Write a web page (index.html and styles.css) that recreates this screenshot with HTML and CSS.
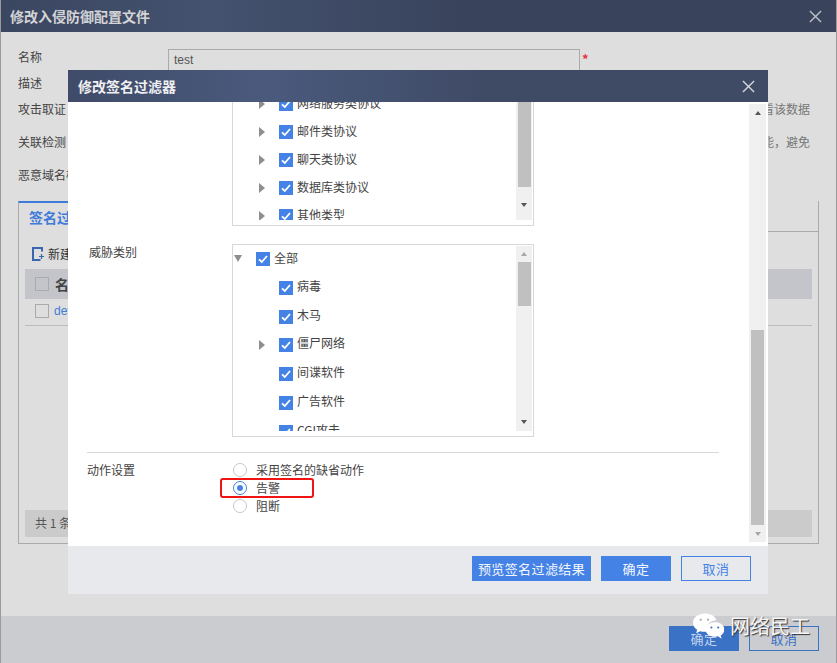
FILE: index.html
```html
<!DOCTYPE html>
<html lang="zh-CN">
<head>
<meta charset="utf-8">
<title>修改签名过滤器</title>
<link rel="stylesheet" href="styles.css">
</head>
<body>
<svg class="sprite" width="0" height="0" aria-hidden="true">
  <symbol id="chk" viewBox="0 0 14 14"><path d="M3 7.300 5.800 10 11 4" fill="none" stroke="#fff" stroke-width="1.800"/></symbol>
  <symbol id="x" viewBox="0 0 14 14"><path d="M1 1 13 13M13 1 1 13" fill="none" stroke="currentColor" stroke-width="1.500"/></symbol>
</svg>
<div class="app">
  <header class="win-head outer-head">
    <span class="win-title">修改入侵防御配置文件</span>
    <svg class="close"><use href="#x"/></svg>
  </header>
  <main class="outer-body">
    <div class="form">
      <div class="f-row f-26"><span class="f-label">名称</span><div class="f-input">test</div><span class="req">*</span></div>
      <div class="f-row f-26"><span class="f-label">描述</span></div>
      <div class="f-row f-33"><span class="f-label">攻击取证</span><span class="f-note">查看该数据</span></div>
      <div class="f-row f-33"><span class="f-label">关联检测</span><span class="f-note">功能，避免</span></div>
      <div class="f-row f-34"><span class="f-label">恶意域名检测</span></div>
    </div>
    <section class="panel">
      <div class="tabs"><span class="tab">签名过滤器</span></div>
      <div class="panel-in">
        <div class="toolbar">
          <svg class="new-ic" viewBox="0 0 12 14"><path d="M10 4.500V1H1v12h7.500" fill="none" stroke="#3a66b0" stroke-width="2"/><path d="M7 9.500h5M9.500 7v5" fill="none" stroke="#3a66b0" stroke-width="1.200"/></svg>
          <span>新建</span>
        </div>
        <div class="t-head"><span class="o-box"></span><b>名称</b></div>
        <div class="t-row"><span class="o-box"></span><span class="t-link">default</span></div>
        <div class="t-foot">共 1 条</div>
      </div>
    </section>
  </main>
  <footer class="outer-foot">
    <span class="btn btn-fill dim">确定</span>
    <span class="btn btn-line dim">取消</span>
  </footer>

  <div class="modal">
    <header class="win-head modal-head">
      <span class="win-title">修改签名过滤器</span>
      <svg class="close"><use href="#x"/></svg>
    </header>
    <div class="modal-body">
      <div class="scroll-content">
        <div class="row row-first">
          <span class="label"></span>
          <div class="list list-a">
            <div class="list-in">
              <div class="tree tree-scrolled">
                <div class="node n2"><i class="tri"></i><span class="cb"><svg><use href="#chk"/></svg></span><span class="node-text">网络服务类协议</span></div>
                <div class="node n2"><i class="tri"></i><span class="cb"><svg><use href="#chk"/></svg></span><span class="node-text">邮件类协议</span></div>
                <div class="node n2"><i class="tri"></i><span class="cb"><svg><use href="#chk"/></svg></span><span class="node-text">聊天类协议</span></div>
                <div class="node n2"><i class="tri"></i><span class="cb"><svg><use href="#chk"/></svg></span><span class="node-text">数据库类协议</span></div>
                <div class="node n2"><i class="tri"></i><span class="cb"><svg><use href="#chk"/></svg></span><span class="node-text">其他类型</span></div>
              </div>
              <div class="sb">
                <div class="sb-thumb thumb-a"></div>
                <i class="arr-d"></i>
              </div>
            </div>
          </div>
        </div>
        <div class="row row-second">
          <span class="label label-in">威胁类别</span>
          <div class="list list-b">
            <div class="list-in">
              <div class="tree tree-b">
                <div class="node n1"><i class="tri-d"></i><span class="cb"><svg><use href="#chk"/></svg></span><span class="node-text">全部</span></div>
                <div class="node n2"><i class="tri-none"></i><span class="cb"><svg><use href="#chk"/></svg></span><span class="node-text">病毒</span></div>
                <div class="node n2"><i class="tri-none"></i><span class="cb"><svg><use href="#chk"/></svg></span><span class="node-text">木马</span></div>
                <div class="node n2"><i class="tri"></i><span class="cb"><svg><use href="#chk"/></svg></span><span class="node-text">僵尸网络</span></div>
                <div class="node n2"><i class="tri-none"></i><span class="cb"><svg><use href="#chk"/></svg></span><span class="node-text">间谍软件</span></div>
                <div class="node n2"><i class="tri-none"></i><span class="cb"><svg><use href="#chk"/></svg></span><span class="node-text">广告软件</span></div>
                <div class="node n2"><i class="tri-none"></i><span class="cb"><svg><use href="#chk"/></svg></span><span class="node-text">CGI攻击</span></div>
              </div>
              <div class="sb">
                <i class="arr-u light"></i>
                <div class="sb-thumb thumb-b"></div>
                <i class="arr-d arr-end"></i>
              </div>
            </div>
          </div>
        </div>
        <div class="rule"></div>
        <div class="row row-action">
          <span class="label">动作设置</span>
          <div class="radios">
            <div class="radio-row"><span class="radio"></span><span class="radio-text">采用签名的缺省动作</span></div>
            <div class="radio-row"><span class="radio on"></span><span class="radio-text">告警</span></div>
            <div class="radio-row"><span class="radio"></span><span class="radio-text">阻断</span></div>
            <div class="mark"></div>
          </div>
        </div>
      </div>
      <div class="vbar">
        <i class="arr-u"></i>
        <div class="vbar-thumb"></div>
        <i class="arr-d light"></i>
      </div>
    </div>
    <footer class="modal-foot">
      <span class="btn btn-fill btn-wide">预览签名过滤结果</span>
      <span class="btn btn-fill">确定</span>
      <span class="btn btn-line">取消</span>
    </footer>
  </div>

  <div class="wm">
    <svg class="wm-ic" viewBox="0 0 32 28">
      <path d="M12 0C5.500 0 0 4 0 9.500c0 3 1.700 5.600 4.300 7.400L3.200 20.500l4.300-2.200c1.400.4 3 .6 4.500.6 1 0 1.500 0 2.500-.2-.4-1-.5-2-.5-3 0-5 4.700-8.700 10.300-8.700C22.800 2.800 18 0 12 0Z" fill="#fff"/>
      <path d="M22.500 9C17.500 9 13 12.100 13 16.500S17.500 24 22.500 24c1 0 2.300-.2 3.300-.5l3.700 2.500-.9-3.300c2.400-1.500 3.900-3.800 3.900-6.200C32.500 12.100 27.500 9 22.500 9Z" fill="#fff"/>
      <circle cx="8" cy="6.500" r="1.300" fill="#bbb"/><circle cx="15.500" cy="6.500" r="1.300" fill="#bbb"/>
      <circle cx="19" cy="14.500" r="1.100" fill="#3a72c6"/><circle cx="26" cy="14.500" r="1.100" fill="#3a72c6"/>
    </svg>
    <span class="wm-text">网络民工</span>
  </div>
</div>
</body>
</html>
```
FILE: styles.css
```css
* { box-sizing: border-box; }
html, body { margin: 0; padding: 0; }
body {
  background: #9b9b9b;
  font-family: "Noto Sans CJK SC", "Liberation Sans", sans-serif;
  font-size: 12px;
  line-height: 16px;
  color: #444;
  overflow: hidden;
}
.sprite { position: absolute; }
.app {
  position: relative;
  width: 837px;
  height: 663px;
  padding: 0 1px;
  display: flex;
  flex-direction: column;
  overflow: hidden;
}

/* Window chrome */
.win-head {
  height: 32px;
  flex: none;
  display: flex;
  align-items: center;
  justify-content: space-between;
}
.outer-head {
  padding: 0 14px 0 9px;
  background: linear-gradient(90deg, #3b4660, #44526f 25%, #39435c 55%);
  color: #d4d4d6;
}
.modal-head {
  padding: 0 13px 0 10px;
  background: linear-gradient(90deg, #3f4b68, #4a5a7d 28%, #3f4a65 60%);
  color: #f0f0f2;
}
.win-title { font-size: 14px; font-weight: 700; }
.close { width: 13px; height: 13px; color: #bcbfc6; }
.modal-head .close { color: #d4d6dc; }

/* Outer window */
.outer-body {
  flex: 1;
  min-height: 0;
  background: #dedede;
  padding: 17px 17px 0;
  display: flex;
  flex-direction: column;
}
.form { flex: none; }
.f-row { display: flex; align-items: flex-start; }
.f-26 { height: 26px; }
.f-33 { height: 33px; }
.f-34 { height: 34px; }
.f-label { width: 150px; flex: none; }
.f-input {
  width: 412px;
  height: 24px;
  border: 1px solid #aaa;
  padding: 2px 4px 2px 5px;
  font-family: "Liberation Sans", sans-serif;
  color: #555;
}
.req { color: #e8353d; margin: 2px 0 0 2px; font-size: 13px; font-weight: 700; }
.f-note { margin-left: auto; margin-right: 9px; color: #777; }

.panel {
  width: 801px;
  height: 343px;
  border: 1px solid #aaa;
  border-top: 0;
  display: flex;
  flex-direction: column;
}
.tabs {
  height: 31px;
  flex: none;
  border-bottom: 1px solid #aaa;
  display: flex;
  margin: 0 -1px;
}
.tab {
  width: 110px;
  height: 31px;
  background: #dedede;
  border-top: 2px solid #3f7bd9;
  border-left: 1px solid #aaa;
  padding: 6px 0 0 10px;
  font-size: 14px;
  font-weight: 700;
  color: #3f7bd9;
}
.panel-in {
  flex: 1;
  min-height: 0;
  padding: 0 6px 6px;
  display: flex;
  flex-direction: column;
}
.toolbar { height: 37px; flex: none; display: flex; align-items: center; gap: 4px; padding: 6px 0 0 7px; color: #333; }
.new-ic { width: 12px; height: 14px; }
.t-head {
  height: 30px;
  flex: none;
  background: #c3c5cb;
  display: flex;
  align-items: center;
  gap: 6px;
  padding-left: 10px;
  font-size: 14px;
}
.t-row {
  height: 27px;
  flex: none;
  border-bottom: 1px solid #bcbcbc;
  display: flex;
  align-items: center;
  gap: 5px;
  padding: 0 0 3px 10px;
}
.t-link { color: #3f7bd9; font-family: "Liberation Sans", sans-serif; }
.o-box { width: 14px; height: 14px; border: 1px solid #aaa; flex: none; }
.t-foot {
  height: 27px;
  flex: none;
  margin-top: auto;
  background: #cbcbcb;
  padding: 5px 10px;
  color: #555;
}
.outer-foot {
  height: 47px;
  flex: none;
  background: #cbcccf;
  display: flex;
  justify-content: flex-end;
  gap: 10px;
  padding: 10px 17px 0 0;
}

/* Buttons */
.btn {
  width: 70px;
  height: 25px;
  font-size: 13px;
  line-height: 23px;
  text-align: center;
  border: 1px solid #4582e6;
  letter-spacing: .4px;
}
.btn-fill { background: #4582e6; color: #f4f7fd; }
.btn-line { color: #4582e6; }
.btn-wide { width: 119px; white-space: nowrap; }
.btn-fill.dim { background: #3a72c6; border-color: #3a72c6; color: #c4d4ee; }
.btn-line.dim { border-color: #3a72c6; color: #3a72c6; }

/* Modal */
.modal {
  position: absolute;
  left: 68px;
  top: 70px;
  width: 700px;
  height: 524px;
  display: flex;
  flex-direction: column;
  background: #fff;
}
.modal-body {
  flex: none;
  height: 444px;
  padding: 2px 2px 4px 0;
  display: flex;
  overflow: hidden;
}
.scroll-content { flex: 1; min-width: 0; }
.vbar {
  width: 17px;
  flex: none;
  background: #f0f0f0;
  display: flex;
  flex-direction: column;
  align-items: center;
  padding: 7px 0 6px;
}
.vbar-thumb {
  width: 13px;
  height: 195px;
  background: #c0c0c0;
  margin: auto 0 4px;
}
.vbar .arr-d { margin-top: 3px; }

.row { display: flex; padding-left: 19px; }
.row-first { margin-top: -8px; }
.row-second { margin-top: 18px; }
.row-action { margin-top: 8px; }
.label { width: 145px; flex: none; }
.label-in { padding-left: 2px; }
.row-action .label { padding-top: 1px; }

.list {
  width: 302px;
  border: 1px solid #d8d8d8;
  padding: 1px 1px 5px;
  flex: none;
  background: #fff;
}
.list-a { height: 130px; border-top: 0; padding-top: 0; }
.list-b { height: 193px; }
.list-in { display: flex; height: 100%; }
.tree { flex: 1; min-width: 0; overflow: hidden; }
.tree-scrolled .node { height: 28px; }
.tree-scrolled .node:first-child { margin-top: -5px; }
.node {
  height: 28.8px;
  display: flex;
  align-items: flex-start;
  padding-top: 6px;
  line-height: 14px;
  white-space: nowrap;
}
.node-text { margin-top: -1px; }
.tree-b .n2 .node-text { margin-top: -2px; }
.n1 { padding-left: 0; }
.n2 { padding-left: 23px; }
.node > i { width: 22px; flex: none; display: block; position: relative; height: 14px; }
.tri::before {
  content: "";
  position: absolute;
  left: 2px;
  top: 2px;
  border-left: 6px solid #8e8e8e;
  border-top: 5px solid transparent;
  border-bottom: 5px solid transparent;
}
.tri-d::before {
  content: "";
  position: absolute;
  left: 0;
  top: 3px;
  border-top: 7px solid #8e8e8e;
  border-left: 4.500px solid transparent;
  border-right: 4.500px solid transparent;
}
.cb {
  width: 14px;
  height: 14px;
  flex: none;
  background: #4582e6;
  margin-right: 4px;
  display: block;
}
.cb svg { display: block; width: 14px; height: 14px; }

/* List scrollbars */
.sb {
  width: 16px;
  flex: none;
  background: #f0f0f0;
  display: flex;
  flex-direction: column;
  align-items: center;
}
.sb-thumb { width: 13px; background: #c0c0c0; }
.thumb-a { height: 91px; margin-bottom: 16px; }
.thumb-b { height: 44px; margin-top: 6px; }
.arr-u, .arr-d { display: block; width: 0; height: 0; border-left: 3.500px solid transparent; border-right: 3.500px solid transparent; flex: none; }
.arr-u { border-bottom: 4px solid #555; }
.arr-d { border-top: 4px solid #555; }
.arr-u.light { border-bottom-color: #a6a6a6; }
.arr-d.light { border-top-color: #a6a6a6; }
.list-b .arr-u { margin-top: 6px; }
.arr-end { margin-top: auto; margin-bottom: 7px; }

.rule { height: 1px; background: #d8d8d8; margin: 15px 0 0 19px; width: 632px; }

.radios { position: relative; padding-left: 1px; }
.radio-row { height: 18px; display: flex; align-items: center; gap: 9px; white-space: nowrap; }
.radio-text { margin-top: -1px; }
.radio {
  width: 14px;
  height: 14px;
  border: 1px solid #c6c9cf;
  border-radius: 50%;
  flex: none;
  display: flex;
  align-items: center;
  justify-content: center;
}
.radio.on { border-color: #4582e6; }
.radio.on::after { content: ""; width: 6px; height: 6px; border-radius: 50%; background: #4582e6; }
.mark {
  position: absolute;
  left: -12px;
  top: 17px;
  width: 94px;
  height: 20px;
  border: 2px solid #f01414;
  border-radius: 3px;
}
.modal-foot {
  flex: 1;
  background: #e7e9ed;
  display: flex;
  justify-content: flex-end;
  gap: 10px;
  padding: 10px 17px 0 0;
}

/* Watermark */
.wm {
  position: absolute;
  left: 693px;
  top: 613px;
  display: flex;
  align-items: flex-start;
  gap: 6px;
}
.wm-ic { width: 31px; height: 28px; }
.wm-text {
  font-size: 20px;
  line-height: 26px;
  color: #f6f6f6;
  text-shadow: 1px 1px 1px #333;
  white-space: nowrap;
}
```
